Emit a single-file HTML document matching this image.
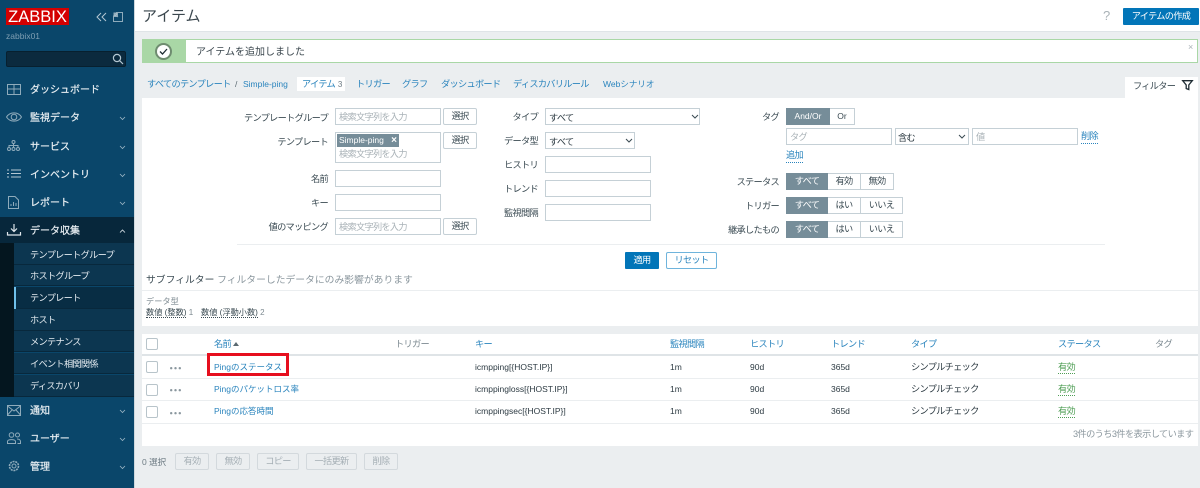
<!DOCTYPE html>
<html lang="ja"><head><meta charset="utf-8"><title>アイテム</title>
<style>
*{box-sizing:border-box}
html,body{margin:0;padding:0;width:1200px;height:488px;overflow:hidden;background:#ebeef0;font-family:"Liberation Sans","Noto Sans CJK JP",sans-serif;font-size:8.5px;color:#1f2c33}
#w{position:absolute;left:0;top:0;width:1200px;height:488px;overflow:hidden;filter:blur(.3px)}
.a{position:absolute}
.t{position:absolute;white-space:nowrap;line-height:14px;height:14px;margin-top:1px}
.l{color:#2a84bd}
.m{color:#e9eff3;font-size:10px;left:30px;-webkit-text-stroke:.2px #e9eff3}
.s{color:#e4ebf0;left:30px}
.sb{position:absolute;left:14px;width:120px;height:21px;background:#0c3650;border-bottom:1px solid #08283c}
.lb{color:#3a4a52;text-align:right;margin-top:2px}
.i{position:absolute;background:#fff;border:1px solid #c5d0d6;height:17px}
.ph{color:#a9b2b7;margin-top:0}
.b{position:absolute;background:#fff;border:1px solid #c5d0d6;height:17px;border-radius:2px;text-align:center;line-height:15px;color:#3a4a52}
.seg{position:absolute;height:17px;border:1px solid #c5d0d6;background:#fff;text-align:center;line-height:15px;color:#3a4a52}
.on{background:#768d99;border-color:#768d99;color:#fff}
.th{color:#2a84bd}
.td{font-size:8.5px;color:#2c3a42}
.cb{position:absolute;left:146px;width:12px;height:12px;background:#fff;border:1px solid #b8c4ca;border-radius:2px}
.dis{position:absolute;top:453px;height:17px;background:#ebeef0;border:1px solid #d3d9dd;border-radius:2px;text-align:center;line-height:15px;color:#a5afb5}
.s,.lb,.ph,.b,.seg,.dis,.th,.k{font-size:9.2px;letter-spacing:-.7px}
.p{font-size:8.5px;letter-spacing:0}
.g{color:#4f9e55;font-size:9.2px;letter-spacing:-.7px;border-bottom:1px dotted #4f9e55;height:13px;line-height:12px}
.u{border-bottom:1px dotted #2a84bd;height:14px;line-height:12px}
svg{position:absolute;overflow:visible}
</style></head><body><div id="w">

<!-- sidebar -->
<div class="a" style="left:0;top:0;width:134px;height:488px;background:#0a466a"></div>
<div class="a" style="left:134px;top:0;width:1px;height:488px;background:#cfd8dd"></div>
<div class="a" style="left:6px;top:8px;width:63px;height:17px;background:#d40000"></div>
<div class="a" style="left:6px;top:8px;width:63px;height:17px;text-align:center;color:#fff;font-size:16.500px;line-height:18px;white-space:nowrap">ZABBIX</div>
<svg style="left:96px;top:12px" width="11" height="10" fill="none" stroke="#b5c8d3" stroke-width="1"><path d="M5 1 1 5l4 4M10 1 6 5l4 4"/></svg>
<svg style="left:113px;top:12px" width="10" height="10" fill="none" stroke="#8fabbb" stroke-width="1"><path d="M3 .5h6.500v9h-9v-6"/><path d="M1 1l4 4M1 1h3.500v3.500H1z" fill="#b5c8d3"/></svg>
<div class="t" style="left:6px;top:28px;color:#7f9fb3;font-size:8.500px">zabbix01</div>
<div class="a" style="left:6px;top:51px;width:120px;height:16px;background:#0b2a3e;border:1px solid #07202f;border-radius:2px"></div>
<svg style="left:112px;top:53px" width="12" height="12" fill="none" stroke="#b5c8d3" stroke-width="1.200"><circle cx="5" cy="5" r="3.600"/><path d="M7.800 7.800 11 11"/></svg>

<svg style="left:7px;top:84px" width="14" height="11" fill="none" stroke="#8fabbb"><path d="M.5.500h13v10H.5zM.5 5h13M7 .5v10"/></svg>
<div class="t m" style="top:83px">ダッシュボード</div>
<svg style="left:6px;top:112px" width="16" height="10" fill="none" stroke="#8fabbb"><path d="M.5 5C4 -.5 12 -.5 15.500 5 12 10.500 4 10.500 .5 5z"/><circle cx="8" cy="5" r="2.800"/></svg>
<div class="t m" style="top:111px">監視データ</div>
<svg style="left:7px;top:140px" width="13" height="11" fill="none" stroke="#8fabbb"><circle cx="6.500" cy="2" r="1.500"/><circle cx="2" cy="9" r="1.500"/><circle cx="6.500" cy="9" r="1.500"/><circle cx="11" cy="9" r="1.500"/><path d="M2 7V5.500h9V7M6.500 3.500V7"/></svg>
<div class="t m" style="top:140px">サービス</div>
<svg style="left:7px;top:169px" width="14" height="9" fill="none" stroke="#b5c8d3"><path d="M0 1h2M4 1h10M0 4.500h2M4 4.500h10M0 8h2M4 8h10"/></svg>
<div class="t m" style="top:168px">インベントリ</div>
<svg style="left:8px;top:196px" width="11" height="13" fill="none" stroke="#8fabbb"><path d="M.5.500h6.500l3.500 3.500v8.500H.5z"/><path d="M3 10V8M5.500 10V6M8 10V7"/></svg>
<div class="t m" style="top:196px">レポート</div>

<div class="a" style="left:0;top:217px;width:134px;height:26px;background:#07273b"></div>
<div class="a" style="left:0;top:243px;width:14px;height:154px;background:#04161f"></div>
<svg style="left:7px;top:224px" width="14" height="12" fill="none" stroke="#dfe7ec" stroke-width="1.200"><path d="M7 0v7M4 4.500 7 7.500l3-3M.5 8v3h13V8"/></svg>
<div class="t m" style="top:224px">データ収集</div>

<div class="sb" style="top:243px;height:22px"></div><div class="sb" style="top:265px"></div><div class="sb" style="top:287px;background:#082d44;height:22px"></div><div class="sb" style="top:309px;height:22px"></div><div class="sb" style="top:331px"></div><div class="sb" style="top:353px"></div><div class="sb" style="top:375px;height:22px"></div>
<div class="a" style="left:14px;top:287px;width:2px;height:22px;background:#6fc0ea"></div>
<div class="t s" style="top:247px">テンプレートグループ</div>
<div class="t s" style="top:268px">ホストグループ</div>
<div class="t s" style="top:290px">テンプレート</div>
<div class="t s" style="top:312px">ホスト</div>
<div class="t s" style="top:334px">メンテナンス</div>
<div class="t s" style="top:356px">イベント相関関係</div>
<div class="t s" style="top:378px">ディスカバリ</div>

<svg style="left:7px;top:405px" width="14" height="11" fill="none" stroke="#8fabbb"><path d="M.5.500h13v10H.5zM.5 1 7 6l6.500-5M.5 10l4.500-5M13.500 10 9 5"/></svg>
<div class="t m" style="top:404px">通知</div>
<svg style="left:7px;top:432px" width="14" height="12" fill="none" stroke="#8fabbb"><circle cx="4.500" cy="3" r="2.300"/><circle cx="10.500" cy="3" r="2"/><path d="M.5 11.500V9.500C.5 7 8.500 7 8.500 9.500v2zM10 7c2 0 3.500 1 3.500 2.500V11.500h-3"/></svg>
<div class="t m" style="top:432px">ユーザー</div>
<svg style="left:8px;top:460px" width="12" height="12" fill="none" stroke="#8fabbb"><circle cx="6" cy="6" r="2"/><circle cx="6" cy="6" r="4.500" stroke-dasharray="2 .8" stroke-width="1.600"/></svg>
<div class="t m" style="top:460px">管理</div>

<svg style="left:119px;top:116px" width="7" height="5" fill="none" stroke="#9db6c5" stroke-width=".8"><path d="M1 1l2.500 2.500L6 1"/></svg>
<svg style="left:119px;top:145px" width="7" height="5" fill="none" stroke="#9db6c5" stroke-width=".8"><path d="M1 1l2.500 2.500L6 1"/></svg>
<svg style="left:119px;top:173px" width="7" height="5" fill="none" stroke="#9db6c5" stroke-width=".8"><path d="M1 1l2.500 2.500L6 1"/></svg>
<svg style="left:119px;top:201px" width="7" height="5" fill="none" stroke="#9db6c5" stroke-width=".8"><path d="M1 1l2.500 2.500L6 1"/></svg>
<svg style="left:119px;top:229px" width="7" height="5" fill="none" stroke="#dfe7ec" stroke-width=".8"><path d="M1 3.500 3.500 1 6 3.500"/></svg>
<svg style="left:119px;top:409px" width="7" height="5" fill="none" stroke="#9db6c5" stroke-width=".8"><path d="M1 1l2.500 2.500L6 1"/></svg>
<svg style="left:119px;top:437px" width="7" height="5" fill="none" stroke="#9db6c5" stroke-width=".8"><path d="M1 1l2.500 2.500L6 1"/></svg>
<svg style="left:119px;top:465px" width="7" height="5" fill="none" stroke="#9db6c5" stroke-width=".8"><path d="M1 1l2.500 2.500L6 1"/></svg>

<!-- header -->
<div class="a" style="left:135px;top:0;width:1065px;height:32px;background:#fff;border-bottom:1px solid #dfe4e7"></div>
<div class="t" style="left:142px;top:6px;height:20px;line-height:20px;font-size:15px;color:#3a464d">アイテム</div>
<div class="t" style="left:1103px;top:8px;font-size:13px;color:#a9b2b7">?</div>
<div class="a" style="left:1123px;top:8px;width:76px;height:17px;background:#0275b8;border-radius:1px;color:#fff;text-align:center;line-height:17px;font-size:9.200px;letter-spacing:-.7px">アイテムの作成</div>

<!-- message -->
<div class="a" style="left:142px;top:39px;width:1056px;height:24px;background:#fff;border:1px solid #a9d7a6"></div>
<div class="a" style="left:142px;top:39px;width:44px;height:24px;background:#a9d7a6"></div>
<div class="a" style="left:155px;top:43px;width:17px;height:17px;border-radius:50%;background:#fff;border:2px solid #6f8c70"></div>
<svg style="left:159px;top:48px" width="9" height="7" fill="none" stroke="#1f2c33" stroke-width="1.300"><path d="M1 3.500 3.500 6 8 1"/></svg>
<div class="t" style="left:196px;top:45px;font-size:10px;color:#3a464d">アイテムを追加しました</div>
<div class="t" style="left:1188px;top:39px;font-size:9px;color:#a9b2b7">×</div>

<!-- tabs -->
<div class="t l k" style="left:147px;top:76px">すべてのテンプレート</div>
<div class="t" style="left:235px;top:76px;font-size:8.500px;color:#5a6870">/</div>
<div class="t l" style="left:243px;top:76px;font-size:8.500px">Simple-ping</div>
<div class="a" style="left:297px;top:77px;width:48px;height:14px;background:#fff"></div>
<div class="t l k" style="left:302px;top:76px">アイテム <span style="color:#6d7b83;font-size:8px;letter-spacing:0;margin-left:1px">3</span></div>
<div class="t l k" style="left:356px;top:76px">トリガー</div>
<div class="t l k" style="left:402px;top:76px">グラフ</div>
<div class="t l k" style="left:441px;top:76px">ダッシュボード</div>
<div class="t l k" style="left:513px;top:76px">ディスカバリルール</div>
<div class="t l" style="left:603px;top:76px;font-size:8.500px">Webシナリオ</div>

<!-- filter panel -->
<div class="a" style="left:142px;top:98px;width:1056px;height:228px;background:#fff"></div>
<div class="a" style="left:1125px;top:77px;width:73px;height:21px;background:#fff"></div>
<div class="t k" style="left:1133px;top:78px;color:#3a4a52">フィルター</div>
<svg style="left:1182px;top:80px" width="11" height="10" fill="none" stroke="#1f2c33" stroke-width="1.300"><path d="M.7.700h9.600L6.800 5v4.500l-2.600-1V5z"/></svg>

<div class="t lb" style="left:228px;top:109px;width:100px">テンプレートグループ</div>
<div class="i" style="left:335px;top:108px;width:106px"></div><div class="t ph" style="left:339px;top:110px">検索文字列を入力</div>
<div class="b" style="left:443px;top:108px;width:34px">選択</div>
<div class="t lb" style="left:228px;top:133px;width:100px">テンプレート</div>
<div class="i" style="left:335px;top:132px;width:106px;height:31px"></div>
<div class="a" style="left:337px;top:134px;width:62px;height:13px;background:#768d99;color:#fff;font-size:8.500px;line-height:13px;padding-left:2px;white-space:nowrap">Simple-ping</div>
<div class="a" style="left:389px;top:134px;width:10px;height:13px;color:#fff;font-size:10px;line-height:13px;font-weight:bold;text-align:center">×</div>
<div class="t ph" style="left:339px;top:147px">検索文字列を入力</div>
<div class="b" style="left:443px;top:132px;width:34px">選択</div>
<div class="t lb" style="left:228px;top:170px;width:100px">名前</div>
<div class="i" style="left:335px;top:170px;width:106px"></div>
<div class="t lb" style="left:228px;top:194px;width:100px">キー</div>
<div class="i" style="left:335px;top:194px;width:106px"></div>
<div class="t lb" style="left:228px;top:218px;width:100px">値のマッピング</div>
<div class="i" style="left:335px;top:218px;width:106px"></div><div class="t ph" style="left:339px;top:220px">検索文字列を入力</div>
<div class="b" style="left:443px;top:218px;width:34px">選択</div>

<div class="t lb" style="left:478px;top:108px;width:60px">タイプ</div>
<div class="i" style="left:545px;top:108px;width:155px"></div><div class="t td k" style="left:549px;top:110px">すべて</div>
<svg style="left:691px;top:114px" width="8" height="5" fill="none" stroke="#3a4a52"><path d="M1 1l3 3 3-3"/></svg>
<div class="t lb" style="left:478px;top:132px;width:60px">データ型</div>
<div class="i" style="left:545px;top:132px;width:90px"></div><div class="t td k" style="left:549px;top:134px">すべて</div>
<svg style="left:625px;top:138px" width="8" height="5" fill="none" stroke="#3a4a52"><path d="M1 1l3 3 3-3"/></svg>
<div class="t lb" style="left:478px;top:156px;width:60px">ヒストリ</div>
<div class="i" style="left:545px;top:156px;width:106px"></div>
<div class="t lb" style="left:478px;top:180px;width:60px">トレンド</div>
<div class="i" style="left:545px;top:180px;width:106px"></div>
<div class="t lb" style="left:478px;top:204px;width:60px">監視間隔</div>
<div class="i" style="left:545px;top:204px;width:106px"></div>

<div class="t lb" style="left:719px;top:108px;width:60px">タグ</div>
<div class="seg on p" style="left:786px;top:108px;width:44px">And/Or</div>
<div class="seg p" style="left:830px;top:108px;width:25px;border-left:0">Or</div>
<div class="i" style="left:786px;top:128px;width:106px"></div><div class="t ph" style="left:790px;top:130px">タグ</div>
<div class="i" style="left:895px;top:128px;width:74px"></div><div class="t td k" style="left:898px;top:130px">含む</div>
<svg style="left:958px;top:134px" width="8" height="5" fill="none" stroke="#3a4a52"><path d="M1 1l3 3 3-3"/></svg>
<div class="i" style="left:972px;top:128px;width:106px"></div><div class="t ph" style="left:976px;top:130px">値</div>
<div class="t l u k" style="left:1081px;top:129px">削除</div>
<div class="t l u k" style="left:786px;top:148px">追加</div>

<div class="t lb" style="left:719px;top:173px;width:60px">ステータス</div>
<div class="seg on" style="left:786px;top:173px;width:42px">すべて</div>
<div class="seg" style="left:828px;top:173px;width:33px;border-left:0">有効</div>
<div class="seg" style="left:861px;top:173px;width:33px;border-left:0">無効</div>
<div class="t lb" style="left:719px;top:197px;width:60px">トリガー</div>
<div class="seg on" style="left:786px;top:197px;width:42px">すべて</div>
<div class="seg" style="left:828px;top:197px;width:33px;border-left:0">はい</div>
<div class="seg" style="left:861px;top:197px;width:42px;border-left:0">いいえ</div>
<div class="t lb" style="left:699px;top:221px;width:80px">継承したもの</div>
<div class="seg on" style="left:786px;top:221px;width:42px">すべて</div>
<div class="seg" style="left:828px;top:221px;width:33px;border-left:0">はい</div>
<div class="seg" style="left:861px;top:221px;width:42px;border-left:0">いいえ</div>

<div class="a" style="left:237px;top:244px;width:868px;height:1px;background:#ebeef0"></div>
<div class="a" style="left:625px;top:252px;width:34px;height:17px;background:#0275b8;border-radius:1px;color:#fff;text-align:center;line-height:17px;font-size:9.200px;letter-spacing:-.7px">適用</div>
<div class="a" style="left:666px;top:252px;width:51px;height:17px;background:#fff;border:1px solid #6fb4dc;border-radius:2px;color:#2a84bd;text-align:center;line-height:15px;font-size:9.200px;letter-spacing:-.7px">リセット</div>

<div class="t" style="left:146px;top:273px;font-size:9.800px;color:#8b979e"><span style="color:#3a4a52">サブフィルター</span> フィルターしたデータにのみ影響があります</div>
<div class="a" style="left:142px;top:290px;width:1056px;height:1px;background:#ebeef0"></div>
<div class="t" style="left:146px;top:294px;font-size:8.200px;color:#7d8a91">データ型</div>
<div class="t" style="left:146px;top:305px;font-size:8.200px;color:#3a4a52"><span style="border-bottom:1px dotted #3a4a52">数値 (整数)</span> <span style="color:#7d8a91;font-size:8px">1</span></div>
<div class="t" style="left:201px;top:305px;font-size:8.200px;color:#3a4a52"><span style="border-bottom:1px dotted #3a4a52">数値 (浮動小数)</span> <span style="color:#7d8a91;font-size:8px">2</span></div>

<!-- table -->
<div class="a" style="left:142px;top:334px;width:1056px;height:112px;background:#fff"></div>
<div class="a" style="left:142px;top:354px;width:1056px;height:2px;background:#dfe4e7"></div>
<div class="a" style="left:142px;top:378px;width:1056px;height:1px;background:#ebeef0"></div>
<div class="a" style="left:142px;top:400px;width:1056px;height:1px;background:#ebeef0"></div>
<div class="a" style="left:142px;top:423px;width:1056px;height:1px;background:#ebeef0"></div>

<div class="cb" style="top:338px"></div>
<div class="t th" style="left:214px;top:336px">名前</div>
<svg style="left:233px;top:342px" width="6" height="4"><path d="M0 4 3 0l3 4z" fill="#5a6870"/></svg>
<div class="t k" style="left:395px;top:336px;color:#7d8a91">トリガー</div>
<div class="t th" style="left:475px;top:336px">キー</div>
<div class="t th" style="left:670px;top:336px">監視間隔</div>
<div class="t th" style="left:750px;top:336px">ヒストリ</div>
<div class="t th" style="left:831px;top:336px">トレンド</div>
<div class="t th" style="left:911px;top:336px">タイプ</div>
<div class="t th" style="left:1058px;top:336px">ステータス</div>
<div class="t k" style="left:1155px;top:336px;color:#7d8a91">タグ</div>

<div class="cb" style="top:361px"></div>
<svg style="left:170px;top:367px" width="11" height="3" fill="#8a979e"><circle cx="1.200" cy="1.200" r="1.200"/><circle cx="5.500" cy="1.200" r="1.200"/><circle cx="9.800" cy="1.200" r="1.200"/></svg>
<div class="cb" style="top:384px"></div>
<svg style="left:170px;top:389px" width="11" height="3" fill="#8a979e"><circle cx="1.200" cy="1.200" r="1.200"/><circle cx="5.500" cy="1.200" r="1.200"/><circle cx="9.800" cy="1.200" r="1.200"/></svg>
<div class="cb" style="top:406px"></div>
<svg style="left:170px;top:412px" width="11" height="3" fill="#8a979e"><circle cx="1.200" cy="1.200" r="1.200"/><circle cx="5.500" cy="1.200" r="1.200"/><circle cx="9.800" cy="1.200" r="1.200"/></svg>

<div class="t th p" style="left:214px;top:359px">Pingのステータス</div>
<div class="t th p" style="left:214px;top:381px">Pingのパケットロス率</div>
<div class="t th p" style="left:214px;top:403px">Pingの応答時間</div>
<div class="a" style="left:207px;top:353px;width:82px;height:23px;border:3px solid #e60f1e"></div>

<div class="t td" style="left:475px;top:359px">icmpping[{HOST.IP}]</div>
<div class="t td" style="left:475px;top:381px">icmppingloss[{HOST.IP}]</div>
<div class="t td" style="left:475px;top:403px">icmppingsec[{HOST.IP}]</div>

<div class="t td" style="left:670px;top:359px">1m</div><div class="t td" style="left:750px;top:359px">90d</div><div class="t td" style="left:831px;top:359px">365d</div><div class="t td k" style="left:911px;top:359px">シンプルチェック</div><div class="t g" style="left:1058px;top:360px">有効</div>
<div class="t td" style="left:670px;top:381px">1m</div><div class="t td" style="left:750px;top:381px">90d</div><div class="t td" style="left:831px;top:381px">365d</div><div class="t td k" style="left:911px;top:381px">シンプルチェック</div><div class="t g" style="left:1058px;top:382px">有効</div>
<div class="t td" style="left:670px;top:403px">1m</div><div class="t td" style="left:750px;top:403px">90d</div><div class="t td" style="left:831px;top:403px">365d</div><div class="t td k" style="left:911px;top:403px">シンプルチェック</div><div class="t g" style="left:1058px;top:404px">有効</div>

<div class="t k" style="left:1073px;top:426px;color:#8b979e;letter-spacing:-.6px">3件のうち3件を表示しています</div>

<!-- bulk -->
<div class="t" style="left:142px;top:454px;font-size:8.500px;color:#6d7b83">0 選択</div>
<div class="dis" style="left:175px;width:34px">有効</div>
<div class="dis" style="left:216px;width:34px">無効</div>
<div class="dis" style="left:257px;width:42px">コピー</div>
<div class="dis" style="left:306px;width:51px">一括更新</div>
<div class="dis" style="left:364px;width:34px">削除</div>
</div></body></html>
